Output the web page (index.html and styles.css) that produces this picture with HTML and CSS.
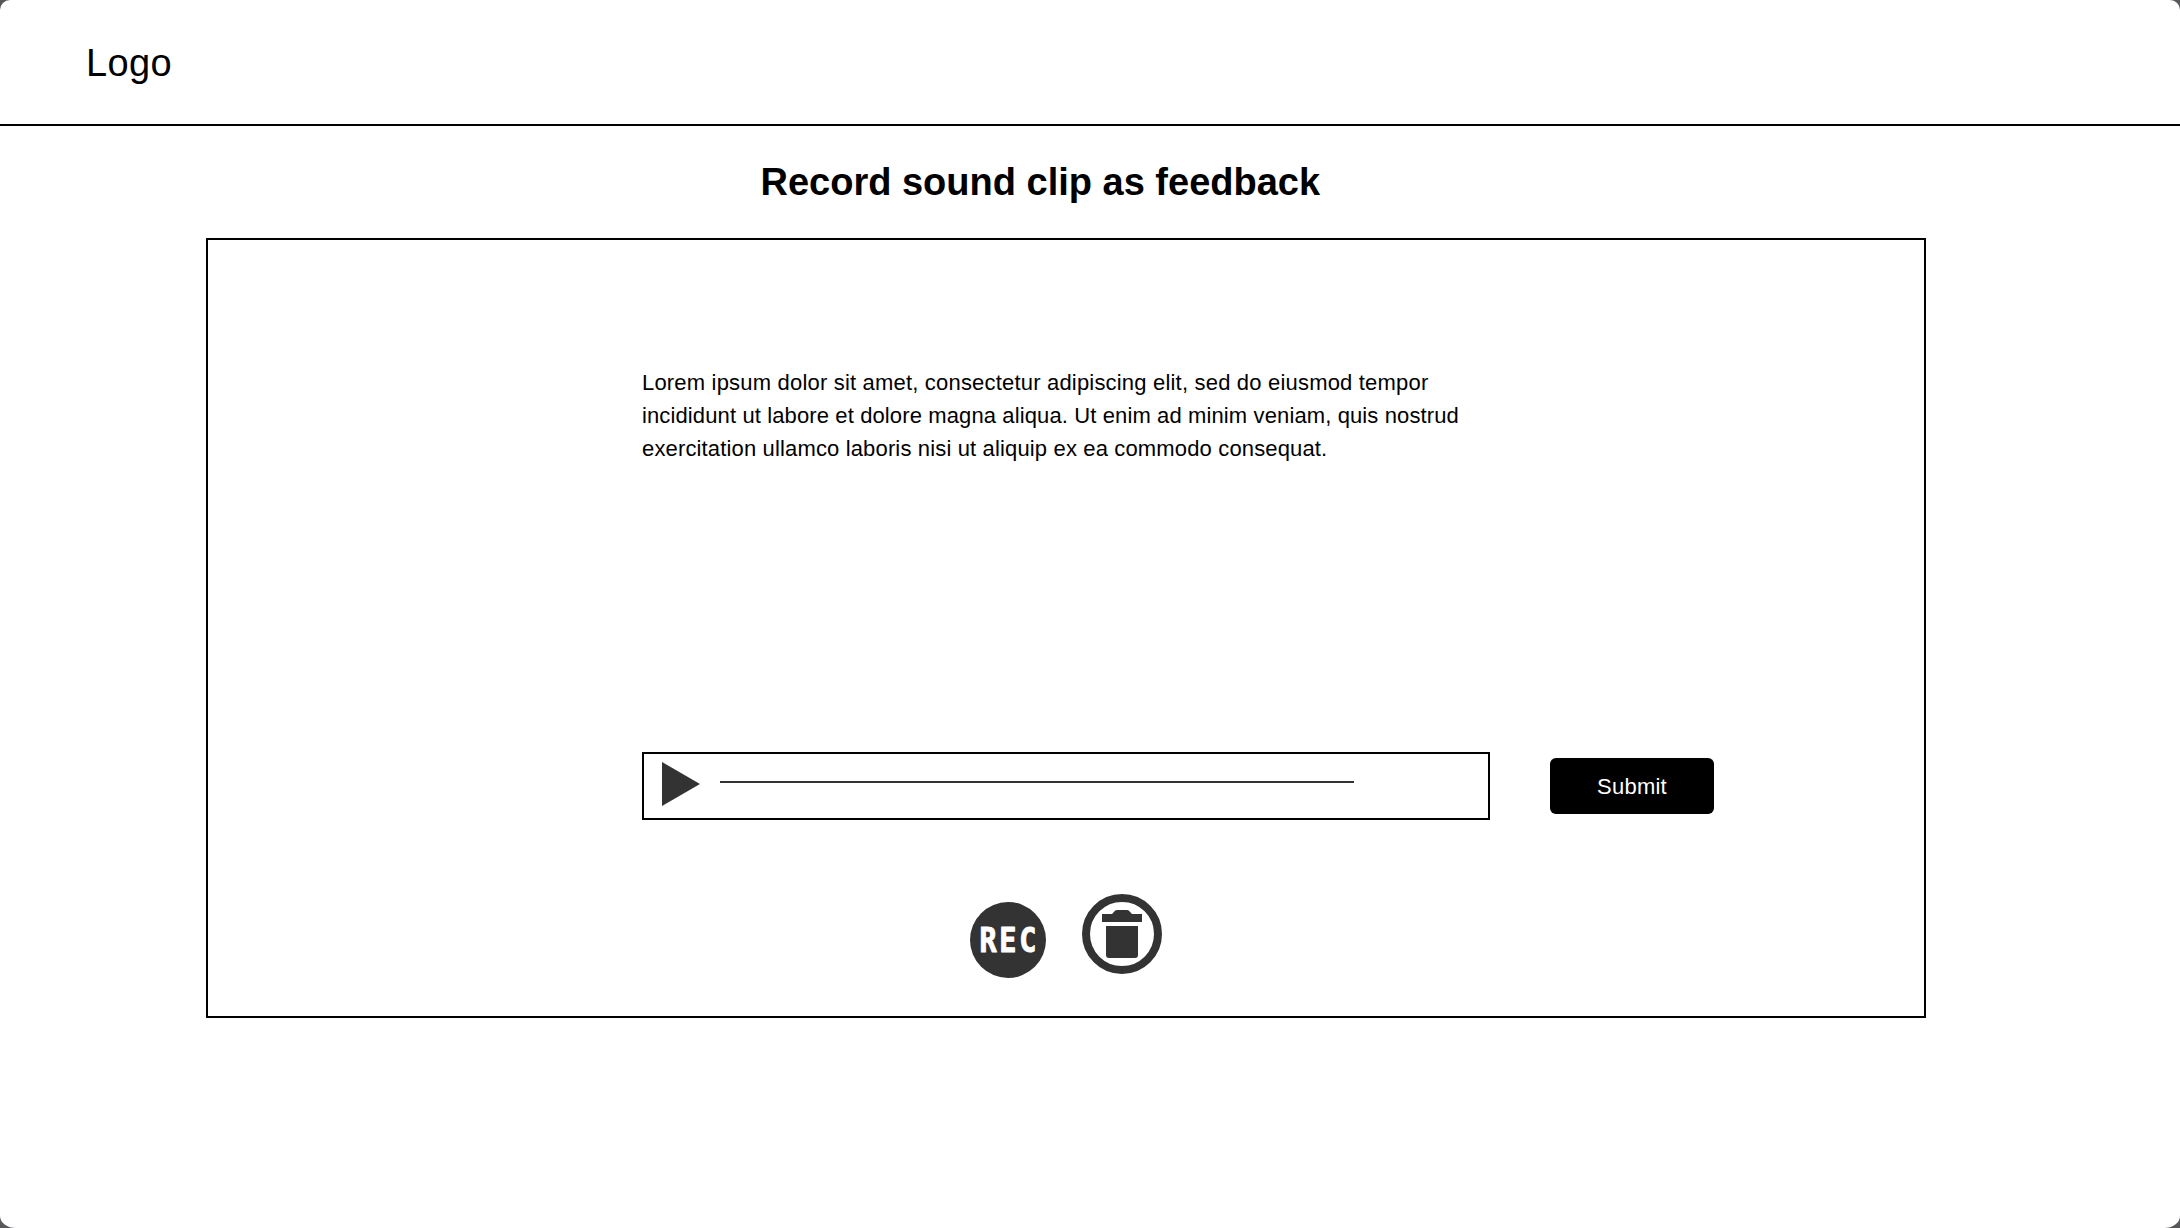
FILE: index.html
```html
<!DOCTYPE html>
<html lang="en">
<head>
<meta charset="utf-8">
<title>Record sound clip as feedback</title>
<link rel="stylesheet" href="styles.css">
</head>
<body>
<div class="window">
  <header class="header"><span class="logo">Logo</span></header>
  <main class="main">
    <h1 class="title">Record sound clip as feedback</h1>
    <section class="panel">
      <p class="prompt"><span class="line-loose">Lorem ipsum dolor sit amet, consectetur adipiscing elit, sed do eiusmod tempor</span><br><span class="line-tight">incididunt ut labore et dolore magna aliqua. Ut enim ad minim veniam, quis nostrud</span><br><span class="line-medium">exercitation ullamco laboris nisi ut aliquip ex ea commodo consequat.</span></p>
      <div class="playback">
        <div class="player">
          <svg class="play" viewBox="0 0 38 44"><path d="M0 0L38 22L0 44Z"/></svg>
          <div class="track"></div>
        </div>
        <button class="submit">Submit</button>
      </div>
      <div class="actions">
        <svg class="record" viewBox="0 0 76 76">
          <circle cx="38" cy="38" r="38"/>
          <text class="rec-label" transform="translate(10.3 50.3) scale(.84 1)" x="-1 22.500 46.500">REC</text>
        </svg>
        <svg class="trash" viewBox="0 0 80 80">
          <circle class="ring" cx="40" cy="40" r="36"/>
          <path d="M20 20H30L33 16.8Q33.8 16 35 16H45Q46.200 16 47 16.800L50 20H60V28H20Z"/>
          <path d="M24 32H56V61Q56 64 53 64H27Q24 64 24 61Z"/>
        </svg>
      </div>
    </section>
  </main>
</div>
</body>
</html>
```

FILE: styles.css
```css
* { box-sizing: border-box; }
body {
  margin: 0;
  background: #58585a;
  color: #000;
  font-family: "Liberation Sans", Arial, sans-serif;
}
.window {
  height: 1228px;
  background: #fff;
  border-radius: 10px 10px 16px 16px / 10px 10px 12px 12px;
  overflow: hidden;
}
.header {
  height: 126px;
  padding: 41px 0 0 86px;
  border-bottom: 2px solid #000;
}
.logo { font-size: 38px; line-height: 44px; letter-spacing: 0.4px; }
.main {
  display: flex;
  flex-direction: column;
  padding-left: 206px;
}
.title {
  margin: 34px 0 34px 554.5px;
  font-size: 38px;
  line-height: 44px;
  white-space: nowrap;
}
.panel {
  width: 1720px;
  height: 780px;
  border: 2px solid #000;
  padding: 126px 0 0 434px;
}
.prompt {
  margin: 0;
  height: 386px;
  font-size: 22px;
  line-height: 33px;
  white-space: nowrap;
}
.line-loose { letter-spacing: 0.19px; }
.line-tight { letter-spacing: 0.12px; }
.line-medium { letter-spacing: 0.15px; }
.playback {
  display: flex;
  align-items: center;
  gap: 60px;
  height: 68px;
}
.player {
  display: flex;
  align-items: flex-start;
  gap: 20px;
  width: 848px;
  height: 68px;
  padding: 8px 18px;
  border: 2px solid #000;
}
.play { width: 38px; height: 44px; fill: #333; }
.track { width: 634px; height: 2px; margin-top: 19px; background: #333; }
.submit {
  width: 164px;
  height: 56px;
  padding: 2px 0 0;
  border: 0;
  border-radius: 6px;
  background: #000;
  color: #fff;
  font: 22px "Liberation Sans", Arial, sans-serif;
  letter-spacing: 0.25px;
}
.actions {
  display: flex;
  align-items: flex-start;
  gap: 36px;
  padding: 74px 0 0 327.5px;
}
.record { width: 76px; height: 76px; margin: 8px 0.5px 0 0; fill: #333; }
.rec-label {
  fill: #fff;
  stroke: #fff;
  stroke-width: 1px;
  stroke-linejoin: round;
  font: bold 34px "DejaVu Sans Mono", monospace;
}
.trash { width: 80px; height: 80px; fill: #333; }
.ring { fill: none; stroke: #333; stroke-width: 8; }
```
